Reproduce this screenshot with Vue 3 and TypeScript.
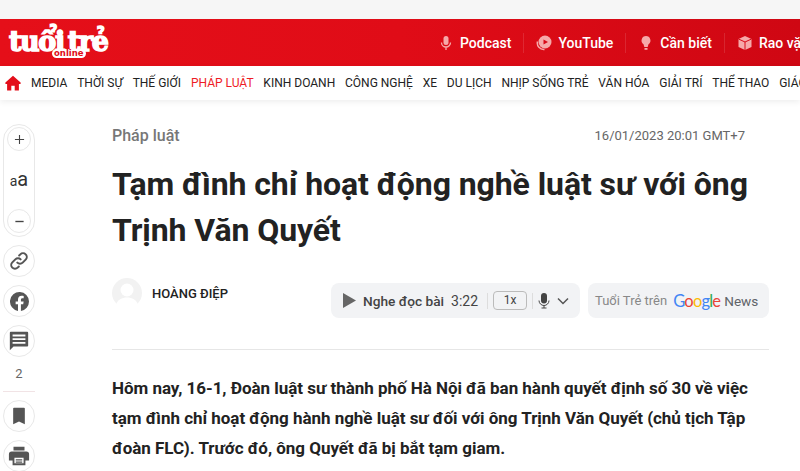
<template>
  <div class="page">
    <header class="topbar">
      <a class="logo">
        <span class="logo-main">tuổi trẻ</span>
        <span class="logo-sub">online</span>
      </a>
      <ul class="quick">
        <li v-for="q in quickLinks" :key="q.name" class="quick-item">
          <svg class="quick-icon" viewBox="0 0 16 16" width="16" height="16" v-html="q.icon"></svg>
          <span>{{ q.name }}</span>
        </li>
      </ul>
    </header>

    <nav class="menu">
      <svg class="home" viewBox="0 0 16 16" width="16" height="16">
        <path d="M8 .8 0.4 7.6V9h1.7v6.4h4.2v-4.6h3.4v4.6h4.2V9h1.7V7.6z" fill="#e30e1a" />
      </svg>
      <a v-for="m in menu" :key="m" class="menu-item" :class="{ active: m === 'PHÁP LUẬT' }">{{ m }}</a>
    </nav>

    <div class="content">
      <aside class="rail">
        <div class="font-pill">
          <button class="circle"><svg viewBox="0 0 12 12" width="11" height="11"><path d="M6 1v10M1 6h10" stroke="#444" stroke-width="1.2" /></svg></button>
          <span class="aa"><small>a</small>a</span>
          <button class="circle"><svg viewBox="0 0 12 12" width="11" height="11"><path d="M1.500 6h9" stroke="#444" stroke-width="1.500" /></svg></button>
        </div>
        <button class="circle">
          <svg viewBox="0 0 24 24" width="20" height="20" fill="none" stroke="#555" stroke-width="2.400" stroke-linecap="round">
            <path d="M10 14a4.500 4.500 0 0 0 6.400 0l3.600-3.600a4.500 4.500 0 0 0-6.400-6.400l-1.400 1.400" />
            <path d="M14 10a4.500 4.500 0 0 0-6.400 0L4 13.600A4.500 4.500 0 0 0 10.400 20l1.400-1.400" />
          </svg>
        </button>
        <button class="circle">
          <svg viewBox="0 0 24 24" width="19" height="19">
            <path fill="#555" d="M24 12a12 12 0 1 0-13.900 11.900v-8.400H7.100V12h3V9.400c0-3 1.800-4.700 4.500-4.700 1.300 0 2.700.2 2.700.2v3h-1.500c-1.500 0-2 .9-2 1.900V12h3.400l-.5 3.500h-2.900v8.400A12 12 0 0 0 24 12z" />
          </svg>
        </button>
        <button class="circle">
          <svg viewBox="0 0 24 24" width="22" height="22">
            <path fill="#555" d="M21 2H3a1 1 0 0 0-1 1v19l4-4h15a1 1 0 0 0 1-1V3a1 1 0 0 0-1-1zM19 15H5v-2h14zm0-4H5V9h14zm0-4H5V5h14z" />
          </svg>
        </button>
        <span class="count">2</span>
        <hr class="rail-line" />
        <button class="circle">
          <svg viewBox="0 0 24 24" width="20" height="20"><path fill="#555" d="M6 2h12a1 1 0 0 1 1 1v19l-7-3.500L5 22V3a1 1 0 0 1 1-1z" /></svg>
        </button>
        <button class="circle">
          <svg viewBox="0 0 24 24" width="22" height="22">
            <path fill="#555" d="M6 2h12v4H6zM4 7h16a3 3 0 0 1 3 3v7h-4v5H5v-5H1v-7a3 3 0 0 1 3-3zm3 7v6h10v-6z" />
            <path fill="#555" d="M8.500 15.500h7v1.300h-7zM8.500 18h7v1.300h-7z" />
          </svg>
        </button>
      </aside>

      <main class="article">
        <div class="meta">
          <span class="category">Pháp luật</span>
          <time class="date">16/01/2023 20:01 GMT+7</time>
        </div>
        <h1 class="title">Tạm đình chỉ hoạt động nghề luật sư với ông Trịnh Văn Quyết</h1>

        <div class="byline">
          <div class="author">
            <svg class="avatar" viewBox="0 0 30 30" width="30" height="30">
              <circle cx="15" cy="15" r="15" fill="#f2f2f2" />
              <circle cx="15" cy="12" r="6.500" fill="#fff" />
              <path d="M4 27c1.500-5.500 6-7.500 11-7.500s9.500 2 11 7.500a15 15 0 0 1-22 0z" fill="#fff" />
            </svg>
            <span class="author-name">HOÀNG ĐIỆP</span>
          </div>
          <div class="tools">
            <div class="player">
              <svg viewBox="0 0 14 16" width="13" height="15"><path d="M0 0l14 8-14 8z" fill="#666" /></svg>
              <span class="listen">Nghe đọc bài</span>
              <span class="time">3:22</span>
              <i class="sep"></i>
              <span class="speed">1x</span>
              <i class="sep"></i>
              <svg class="mic" viewBox="0 0 12 16" width="12" height="16">
                <rect x="3" y="0" width="6" height="10.500" rx="3" fill="#444" />
                <path d="M1 7.500a5 5 0 0 0 10 0M6 12.500V15M3.500 15h5" fill="none" stroke="#444" stroke-width="1" />
              </svg>
              <svg class="chevron" viewBox="0 0 12 8" width="12" height="8"><path d="M1 1.500l5 5 5-5" fill="none" stroke="#555" stroke-width="1.500" /></svg>
            </div>
            <div class="gnews">
              <span class="gnews-label">Tuổi Trẻ trên</span>
              <span class="google"><b class="c-b">G</b><b class="c-r">o</b><b class="c-y">o</b><b class="c-b">g</b><b class="c-g">l</b><b class="c-r">e</b></span>
              <span class="news">News</span>
            </div>
          </div>
        </div>

        <hr class="divider" />
        <p class="lead">Hôm nay, 16-1, Đoàn luật sư thành phố Hà Nội đã ban hành quyết định số 30 về việc tạm đình chỉ hoạt động hành nghề luật sư đối với ông Trịnh Văn Quyết (chủ tịch Tập đoàn FLC). Trước đó, ông Quyết đã bị bắt tạm giam.</p>
      </main>
    </div>
  </div>
</template>

<script setup lang="ts">
const quickLinks = [
  {
    name: 'Podcast',
    icon: '<rect x="5.500" y="1" width="5" height="9" rx="2.500" fill="#f6a9a9"/><path d="M3.500 7.500a4.500 4.500 0 0 0 9 0M8 12v3" fill="none" stroke="#f6a9a9" stroke-width="1.300"/>'
  },
  {
    name: 'YouTube',
    icon: '<circle cx="9" cy="7" r="6.500" fill="#f6a9a9"/><path d="M7.500 4.500 12 7l-4.500 2.500z" fill="#d80a18"/><path d="M1.500 6.500a6.500 6.500 0 0 0 7 8" fill="none" stroke="#f6a9a9" stroke-width="1.500"/>'
  },
  {
    name: 'Cần biết',
    icon: '<path d="M8 1a4.500 4.500 0 0 0-2.500 8.200L6.300 12h3.400l.8-2.800A4.500 4.500 0 0 0 8 1z" fill="#f6a9a9"/><rect x="6.500" y="13" width="3" height="1.800" fill="#f6a9a9"/>'
  },
  {
    name: 'Rao vặt',
    icon: '<path d="M8 1l6.500 3v8L8 15l-6.500-3V4z" fill="#f6a9a9"/><path d="M1.500 4 8 7l6.500-3M8 7v8" fill="none" stroke="#d80a18" stroke-width="1"/>'
  }
]

const menu = [
  'MEDIA', 'THỜI SỰ', 'THẾ GIỚI', 'PHÁP LUẬT', 'KINH DOANH', 'CÔNG NGHỆ', 'XE', 'DU LỊCH',
  'NHỊP SỐNG TRẺ', 'VĂN HÓA', 'GIẢI TRÍ', 'THỂ THAO', 'GIÁO DỤC'
]
</script>

<style>
html, body {
  margin: 0;
  background: #fff;
  overflow: hidden;
}
</style>

<style scoped>
.page {
  width: 800px;
  height: 471px;
  overflow: hidden;
  font-family: Roboto, "Noto Sans", sans-serif;
  color: #1a1a1a;
}

.topbar {
  margin-top: 19px;
  height: 47px;
  display: flex;
  align-items: center;
  white-space: nowrap;
  background: linear-gradient(90deg, #e50f19 0%, #e00c17 50%, #cf0713 100%);
  box-shadow: 0 -19px 0 #f6f6f6;
}

.logo {
  position: relative;
  display: block;
  width: 104px;
  margin-left: 8px;
  margin-right: 314px;
  height: 47px;
  flex: none;
}

.logo-main {
  position: absolute;
  left: 1px;
  top: 5px;
  font-family: "DejaVu Serif", serif;
  font-weight: 700;
  font-size: 27px;
  line-height: 36px;
  letter-spacing: -1.400px;
  word-spacing: -4px;
  color: #fff;
  -webkit-text-stroke: 1.500px #fff;
}

.logo-sub {
  position: absolute;
  left: 44px;
  top: 30px;
  font-family: "DejaVu Sans", sans-serif;
  font-weight: 700;
  font-size: 8.500px;
  line-height: 9px;
  color: #e00c17;
  background: #fff;
  border-radius: 5px;
  padding: 0 2px;
}

.quick {
  display: flex;
  margin: 0;
  padding: 0;
  list-style: none;
}

.quick-item {
  display: flex;
  align-items: center;
  gap: 6px;
  padding: 0 12px;
  height: 20px;
  font-size: 14px;
  font-weight: 500;
  color: #fff;
  border-right: 1px solid rgba(255, 255, 255, 0.12);
}

.quick-item:last-child {
  border-right: none;
}

.menu {
  height: 34px;
  display: flex;
  align-items: center;
  gap: 9.800px;
  padding-left: 5px;
  background: #fff;
  white-space: nowrap;
  box-shadow: 0 2px 6px rgba(0, 0, 0, 0.07);
  position: relative;
}

.home {
  flex: none;
  margin-right: 0.200px;
}

.menu-item {
  font-size: 12px;
  color: #222;
  flex: none;
}

.menu-item.active {
  color: #ee1c25;
}

.content {
  display: flex;
  align-items: flex-start;
  padding-top: 24px;
}

.rail {
  width: 32px;
  margin-left: 3px;
  flex: none;
  display: flex;
  flex-direction: column;
  align-items: center;
  gap: 8px;
}

.circle {
  width: 32px;
  height: 32px;
  flex: none;
  padding: 0;
  display: flex;
  align-items: center;
  justify-content: center;
  border: 1px solid #e8e8e8;
  border-radius: 50%;
  background: #fff;
}

.font-pill {
  width: 32px;
  height: 113px;
  box-sizing: border-box;
  display: flex;
  flex-direction: column;
  align-items: center;
  justify-content: space-between;
  border: 1px solid #e8e8e8;
  border-radius: 16px;
  padding: 2px 0 3px;
}

.font-pill .circle {
  width: 24px;
  height: 24px;
}

.aa {
  font-size: 20px;
  line-height: 20px;
  color: #333;
}

.aa small {
  font-size: 14px;
}

.count {
  font-size: 13px;
  line-height: 18px;
  color: #666;
}

.rail-line {
  width: 32px;
  height: 1px;
  margin: 0;
  border: none;
  background: #f1e3e5;
}

.article {
  width: 657px;
  margin-left: 77px;
  flex: none;
}

.meta {
  display: flex;
  justify-content: space-between;
  align-items: center;
  height: 22px;
  padding-right: 24px;
}

.category {
  font-size: 16px;
  font-weight: 500;
  color: #777;
}

.date {
  font-size: 13px;
  color: #666;
}

.title {
  margin: 15px 0 0;
  font-size: 32px;
  line-height: 46px;
  font-weight: 700;
  letter-spacing: -0.080px;
  color: #222;
}

.byline {
  display: flex;
  justify-content: space-between;
  margin-top: 24px;
}

.author {
  display: flex;
  align-items: center;
  gap: 10px;
  height: 30px;
  padding-top: 1px;
}

.author-name {
  font-size: 13px;
  font-weight: 500;
  color: #222;
}

.tools {
  display: flex;
  gap: 8px;
  margin-top: 6px;
}

.player,
.gnews {
  display: flex;
  align-items: center;
  height: 35px;
  background: #f2f3f5;
  border-radius: 8px;
}

.player {
  width: 249px;
  box-sizing: border-box;
  padding-left: 12px;
  color: #444;
}

.listen {
  font-size: 13.700px;
  font-weight: 500;
  margin-left: 7px;
}

.time {
  font-size: 14px;
  margin-left: 7px;
  margin-right: 4px;
}

.sep {
  width: 1px;
  height: 16px;
  background: #ddd;
  margin: 0 5px;
}

.speed {
  width: 32px;
  height: 17px;
  line-height: 17px;
  text-align: center;
  font-size: 12px;
  border: 1px solid #bbb;
  border-radius: 4px;
}

.chevron {
  margin-left: 7px;
}

.gnews {
  width: 181px;
  box-sizing: border-box;
  padding-left: 7px;
}

.gnews-label {
  font-size: 13px;
  color: #888;
}

.google {
  margin-left: 6px;
  font-family: Lato, sans-serif;
  font-size: 16.500px;
  letter-spacing: -0.800px;
}

.google b {
  font-weight: 400;
}

.c-b { color: #4285f4; }
.c-r { color: #ea4335; }
.c-y { color: #fbbc05; }
.c-g { color: #34a853; }

.news {
  margin-left: 4px;
  font-size: 13.600px;
  color: #5f6368;
}

.divider {
  height: 1px;
  margin: 31px 0 0;
  border: none;
  background: #e6e6e6;
}

.lead {
  margin: 23px 0 0;
  font-size: 17px;
  line-height: 30px;
  font-weight: 700;
  letter-spacing: -0.030px;
  color: #222;
}
</style>
